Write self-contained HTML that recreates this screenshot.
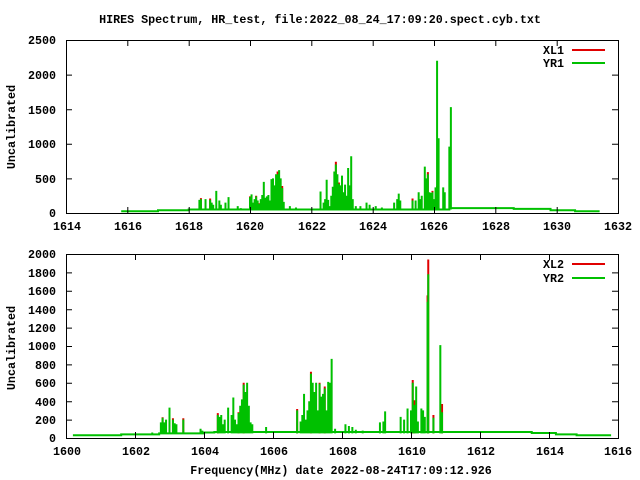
<!DOCTYPE html>
<html><head><style>
html,body{margin:0;padding:0;background:#fff}
svg{display:block}
text{font-family:"Liberation Mono","DejaVu Sans Mono",monospace;font-weight:bold;font-size:11.7px;fill:#000}
.g{stroke:#00c000;fill:none;stroke-width:2}
.r{stroke:#e00000;fill:none;stroke-width:2}
</style></head><body>
<svg width="640" height="480" viewBox="0 0 640 480" xmlns="http://www.w3.org/2000/svg">
<text x="320" y="23" text-anchor="middle">HIRES Spectrum, HR_test, file:2022_08_24_17:09:20.spect.cyb.txt</text>

<!-- TOP PLOT -->
<g transform="translate(66,213) scale(30.667,-0.0692) translate(-1614,0)">
<path class="r" vector-effect="non-scaling-stroke" d="M1618.4 50V215M1618.7 50V210M1620.0 50V240M1620.2 50V250M1620.3 50V140M1620.9 50V600M1621.05 50V390M1622.8 50V740M1622.9 50V440M1625.3 50V210M1625.8 50V590M1625.95 50V320M1626.1 50V390"/>
<path class="g" vector-effect="non-scaling-stroke" d="M1615.8 25H1617V40H1618V50H1626.5V70H1628.6V60H1629.8V40H1630.6V25H1631.4
M1618.1 50V60M1618.2 50V55M1618.35 50V190M1618.4 50V200M1618.55 50V200M1618.7 50V190M1618.75 50V150M1618.8 50V120M1618.9 50V320M1619.0 50V180M1619.05 50V120M1619.2 50V150M1619.3 50V230M1619.6 50V100M1619.7 50V70
M1620.0 50V230M1620.05 50V270M1620.1 50V150M1620.15 50V200M1620.2 50V240M1620.25 50V180M1620.3 50V130M1620.35 50V200M1620.4 50V260M1620.45 50V450M1620.5 50V220M1620.55 50V240M1620.6 50V260M1620.65 50V180M1620.7 50V490M1620.75 50V500M1620.8 50V400M1620.85 50V560M1620.9 50V560M1620.95 50V620M1621.0 50V500M1621.05 50V360M1621.1 50V160M1621.3 50V100M1621.5 50V80
M1622.3 50V310M1622.4 50V150M1622.45 50V200M1622.5 50V480M1622.55 50V190M1622.6 50V100M1622.65 50V250M1622.7 50V380M1622.75 50V600M1622.8 50V700M1622.85 50V560M1622.9 50V420M1622.95 50V400M1623.0 50V540M1623.05 50V300M1623.1 50V410M1623.15 50V250M1623.2 50V650M1623.25 50V400M1623.3 50V820M1623.35 50V200M1623.45 50V100M1623.6 50V100M1623.8 50V150M1623.9 50V120M1624.1 50V100M1624.3 50V80
M1624.7 50V150M1624.8 50V200M1624.85 50V280M1624.9 50V180
M1625.3 50V180M1625.4 50V180M1625.5 50V300M1625.55 50V200M1625.6 50V250M1625.7 50V670M1625.75 50V500M1625.8 50V560M1625.85 50V300M1625.9 50V290M1625.95 50V300M1626.0 50V200M1626.05 50V370M1626.1 50V2200M1626.15 50V1080M1626.3 50V370M1626.35 50V300M1626.5 50V960M1626.55 50V1530"/>
</g>
<g stroke="#000" stroke-width="1" fill="none">
<rect x="66.5" y="40.5" width="552" height="173"/>
<path d="M66 40.5h6M66 75.1h6M66 109.7h6M66 144.3h6M66 178.9h6M618 40.5h-6M618 75.1h-6M618 109.7h-6M618 144.3h-6M618 178.9h-6
M66.5 213v-6M127.8 213v-6M189.2 213v-6M250.5 213v-6M311.8 213v-6M373.2 213v-6M434.5 213v-6M495.8 213v-6M557.2 213v-6M618.5 213v-6
M127.8 40v6M189.2 40v6M250.5 40v6M311.8 40v6M373.2 40v6M434.5 40v6M495.8 40v6M557.2 40v6"/>
</g>
<path d="M572 50h33" stroke="#e00000" stroke-width="2" fill="none"/><path d="M572 63h33" stroke="#00c000" stroke-width="2" fill="none"/>
<text x="564" y="54" text-anchor="end">XL1</text>
<text x="564" y="67" text-anchor="end">YR1</text>
<g text-anchor="end">
<text x="56" y="44">2500</text><text x="56" y="79">2000</text><text x="56" y="114">1500</text><text x="56" y="148">1000</text><text x="56" y="183">500</text><text x="56" y="217">0</text>
</g>
<g text-anchor="middle">
<text x="67" y="230">1614</text><text x="128" y="230">1616</text><text x="189" y="230">1618</text><text x="250" y="230">1620</text><text x="312" y="230">1622</text><text x="373" y="230">1624</text><text x="434" y="230">1626</text><text x="496" y="230">1628</text><text x="557" y="230">1630</text><text x="618" y="230">1632</text>
</g>
<text transform="translate(15,127) rotate(-90)" text-anchor="middle">Uncalibrated</text>

<!-- BOTTOM PLOT -->
<g transform="translate(66,438) scale(34.5,-0.092) translate(-1600,0)">
<path class="r" vector-effect="non-scaling-stroke" d="M1602.8 50V225M1603.1 50V215M1603.4 50V215M1604.4 50V270M1605.0 50V280M1605.15 50V600M1606.7 50V315M1607.1 50V720M1607.35 50V600M1607.5 50V560M1610.05 50V630M1610.1 50V410M1610.5 50V1940M1610.48 50V1550M1610.65 50V250M1610.9 50V370"/>
<path class="g" vector-effect="non-scaling-stroke" d="M1600.2 30H1601.6V40H1602.7V50H1604.0V60H1604.3V65H1610.9V65H1613.5V55H1614.2V40H1614.8V30H1615.8
M1602.5 50V60M1602.6 50V50M1602.75 50V170M1602.8 50V220M1602.85 50V170M1602.9 50V200M1603.0 50V330M1603.1 50V200M1603.15 50V160M1603.2 50V150M1603.4 50V200M1603.9 50V100M1603.95 50V80
M1604.4 50V250M1604.45 50V230M1604.5 50V250M1604.55 50V150M1604.6 50V200M1604.7 50V330M1604.8 50V250M1604.85 50V440M1604.9 50V200M1604.95 50V150M1605.0 50V270M1605.05 50V350M1605.1 50V420M1605.15 50V580M1605.2 50V500M1605.25 50V600M1605.3 50V350M1605.35 50V170M1605.4 50V150M1605.8 50V120
M1606.7 50V300M1606.8 50V180M1606.85 50V250M1606.9 50V480M1606.95 50V200M1607.0 50V300M1607.05 50V400M1607.1 50V700M1607.15 50V600M1607.2 50V500M1607.25 50V600M1607.3 50V300M1607.35 50V590M1607.4 50V450M1607.45 50V480M1607.5 50V540M1607.55 50V300M1607.6 50V610M1607.65 50V600M1607.7 50V860M1607.8 50V100
M1608.1 50V150M1608.2 50V130M1608.3 50V120M1608.4 50V90M1608.6 50V80M1609.1 50V170M1609.2 50V180M1609.25 50V290
M1609.7 50V230M1609.8 50V200M1609.9 50V320M1610.0 50V300M1610.05 50V600M1610.1 50V360M1610.15 50V560M1610.2 50V180M1610.3 50V320M1610.35 50V300M1610.4 50V230M1610.48 50V1480M1610.5 50V1780M1610.65 50V220M1610.85 50V1010M1610.9 50V280"/>
</g>
<g stroke="#000" stroke-width="1" fill="none">
<rect x="66.5" y="254.5" width="552" height="184"/>
<path d="M66 254.5h6M66 272.9h6M66 291.3h6M66 309.7h6M66 328.1h6M66 346.5h6M66 364.9h6M66 383.3h6M66 401.7h6M66 420.1h6
M618 254.5h-6M618 272.9h-6M618 291.3h-6M618 309.7h-6M618 328.1h-6M618 346.5h-6M618 364.9h-6M618 383.3h-6M618 401.7h-6M618 420.1h-6
M66.5 438v-6M135.5 438v-6M204.5 438v-6M273.5 438v-6M342.5 438v-6M411.5 438v-6M480.5 438v-6M549.5 438v-6M618.5 438v-6
M135.5 254v6M204.5 254v6M273.5 254v6M342.5 254v6M411.5 254v6M480.5 254v6M549.5 254v6"/>
</g>
<path d="M572 264h33" stroke="#e00000" stroke-width="2" fill="none"/><path d="M572 278h33" stroke="#00c000" stroke-width="2" fill="none"/>
<text x="564" y="268" text-anchor="end">XL2</text>
<text x="564" y="282" text-anchor="end">YR2</text>
<g text-anchor="end">
<text x="56" y="258">2000</text><text x="56" y="277">1800</text><text x="56" y="295">1600</text><text x="56" y="314">1400</text><text x="56" y="332">1200</text><text x="56" y="350">1000</text><text x="56" y="369">800</text><text x="56" y="387">600</text><text x="56" y="406">400</text><text x="56" y="424">200</text><text x="56" y="442">0</text>
</g>
<g text-anchor="middle">
<text x="67" y="455">1600</text><text x="136" y="455">1602</text><text x="205" y="455">1604</text><text x="274" y="455">1606</text><text x="343" y="455">1608</text><text x="412" y="455">1610</text><text x="481" y="455">1612</text><text x="550" y="455">1614</text><text x="618" y="455">1616</text>
</g>
<text transform="translate(15,348) rotate(-90)" text-anchor="middle">Uncalibrated</text>
<text x="341" y="474" text-anchor="middle">Frequency(MHz) date 2022-08-24T17:09:12.926</text>
</svg>
</body></html>
